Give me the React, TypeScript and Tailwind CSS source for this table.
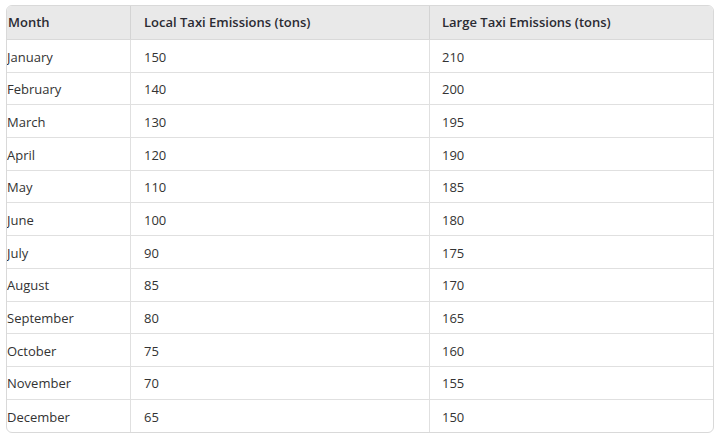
import React from "react";

const rows: [string, number, number][] = [
  ["January", 150, 210],
  ["February", 140, 200],
  ["March", 130, 195],
  ["April", 120, 190],
  ["May", 110, 185],
  ["June", 100, 180],
  ["July", 90, 175],
  ["August", 85, 170],
  ["September", 80, 165],
  ["October", 75, 160],
  ["November", 70, 155],
  ["December", 65, 150],
];

export default function App() {
  return (
    <div
      className="w-[720px] h-[440px] bg-white pt-[5px] pl-[6px]"
      style={{ fontFamily: '"Open Sans", "Noto Sans", sans-serif' }}
    >
      <div className="w-[708px] border border-[#d9d9d9] rounded-[6px] overflow-hidden text-[13px] text-[#333333]">
        <div className="grid grid-cols-[124px_299px_1fr] h-[34px] bg-[#e9e9e9] border-b border-[#d9d9d9] font-semibold text-[#2b2b33]">
          <div className="flex items-center pl-[1px] border-r border-[#d4d4d4]">Month</div>
          <div className="flex items-center pl-[13px] border-r border-[#d4d4d4]">Local Taxi Emissions (tons)</div>
          <div className="flex items-center pl-[12px]">Large Taxi Emissions (tons)</div>
        </div>
        {rows.map(([m, a, b], i) => (
          <div
            key={m}
            className={`grid grid-cols-[124px_299px_1fr] h-[32.7px] ${i < rows.length - 1 ? "border-b border-[#e0e0e0]" : ""}`}
          >
            <div className="flex items-center pt-[3px] border-r border-[#e0e0e0]">{m}</div>
            <div className="flex items-center pl-[13px] pt-[3px] border-r border-[#e0e0e0]">{a}</div>
            <div className="flex items-center pl-[12px] pt-[3px]">{b}</div>
          </div>
        ))}
      </div>
    </div>
  );
}
